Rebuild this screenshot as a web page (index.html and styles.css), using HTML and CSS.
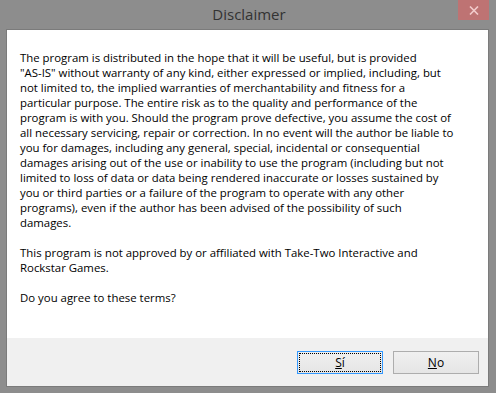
FILE: index.html
```html
<!DOCTYPE html>
<html>
<head>
<meta charset="utf-8">
<link rel="stylesheet" href="styles.css">
</head>
<body>
<div class="window">
  <div class="titlebar">
    <div class="title">Disclaimer</div>
    <div class="close"><svg width="10" height="9" viewBox="0 0 10 9"><path d="M1 0.5 L9 8.5 M9 0.5 L1 8.5" stroke="#f2cccc" stroke-width="1.6"/></svg></div>
  </div>
  <div class="client">
    <div class="content">
      <p class="para">
        <span class="line">The program is distributed in the hope that it will be useful, but is provided</span>
        <span class="line">"AS-IS" without warranty of any kind, either expressed or implied, including, but</span>
        <span class="line">not limited to, the implied warranties of merchantability and fitness for a</span>
        <span class="line">particular purpose. The entire risk as to the quality and performance of the</span>
        <span class="line">program is with you. Should the program prove defective, you assume the cost of</span>
        <span class="line">all necessary servicing, repair or correction. In no event will the author be liable to</span>
        <span class="line">you for damages, including any general, special, incidental or consequential</span>
        <span class="line">damages arising out of the use or inability to use the program (including but not</span>
        <span class="line">limited to loss of data or data being rendered inaccurate or losses sustained by</span>
        <span class="line">you or third parties or a failure of the program to operate with any other</span>
        <span class="line">programs), even if the author has been advised of the possibility of such</span>
        <span class="line">damages.</span>
      </p>
      <p class="para">
        <span class="line">This program is not approved by or affiliated with Take-Two Interactive and</span>
        <span class="line">Rockstar Games.</span>
      </p>
      <p class="para">
        <span class="line">Do you agree to these terms?</span>
      </p>
    </div>
    <div class="footer">
      <button class="btn btn-default"><span class="focus"><u>S</u>í</span></button>
      <button class="btn"><span class="focus-none"><u>N</u>o</span></button>
    </div>
  </div>
</div>
</body>
</html>
```

FILE: styles.css
```css
html, body {
  margin: 0;
  padding: 0;
  width: 496px;
  height: 393px;
  overflow: hidden;
  background: #8d8d8d;
}
.window {
  width: 496px;
  height: 393px;
  display: flex;
  flex-direction: column;
}
.titlebar {
  height: 29px;
  position: relative;
  display: flex;
  justify-content: center;
}
.title {
  font-family: "Open Sans", "Noto Sans", sans-serif;
  font-size: 15px;
  color: #333333;
  line-height: 29px;
  padding-left: 2px;
}
.close {
  position: absolute;
  left: 458px;
  top: 0;
  width: 31px;
  height: 20px;
  background: #be7373;
  display: flex;
  align-items: center;
  justify-content: center;
}
.client {
  margin: 0 7px 0 6px;
  border: 1px solid #7b7b7b;
  height: 356px;
  background: #ffffff;
  display: flex;
  flex-direction: column;
}
.content {
  flex: 1;
  padding: 20px 0 0 13px;
  font-family: "Open Sans", "Noto Sans", sans-serif;
  font-size: 11.4px;
  line-height: 15px;
  color: #000;
}
.para {
  margin: 0 0 15px 0;
}
.line {
  display: block;
  white-space: nowrap;
  height: 15px;
}
.footer {
  height: 48px;
  background: #f0f0f0;
  display: flex;
  justify-content: flex-end;
  align-items: flex-start;
  padding: 13px 9px 0 0;
  box-sizing: border-box;
  gap: 10px;
}
.btn {
  width: 86px;
  height: 23px;
  border: 1px solid #adadad;
  background: linear-gradient(#f0f0f0, #e5e5e5);
  font-family: "Open Sans", "Noto Sans", sans-serif;
  font-size: 12px;
  color: #000;
  padding: 1px;
  margin: 0;
  box-sizing: border-box;
  display: flex;
}
.btn-default {
  border-color: #3399ff;
}
.focus, .focus-none {
  flex: 1;
  display: flex;
  align-items: center;
  justify-content: center;
  border: 1px dotted transparent;
}
.focus {
  border-color: #000;
}
```
